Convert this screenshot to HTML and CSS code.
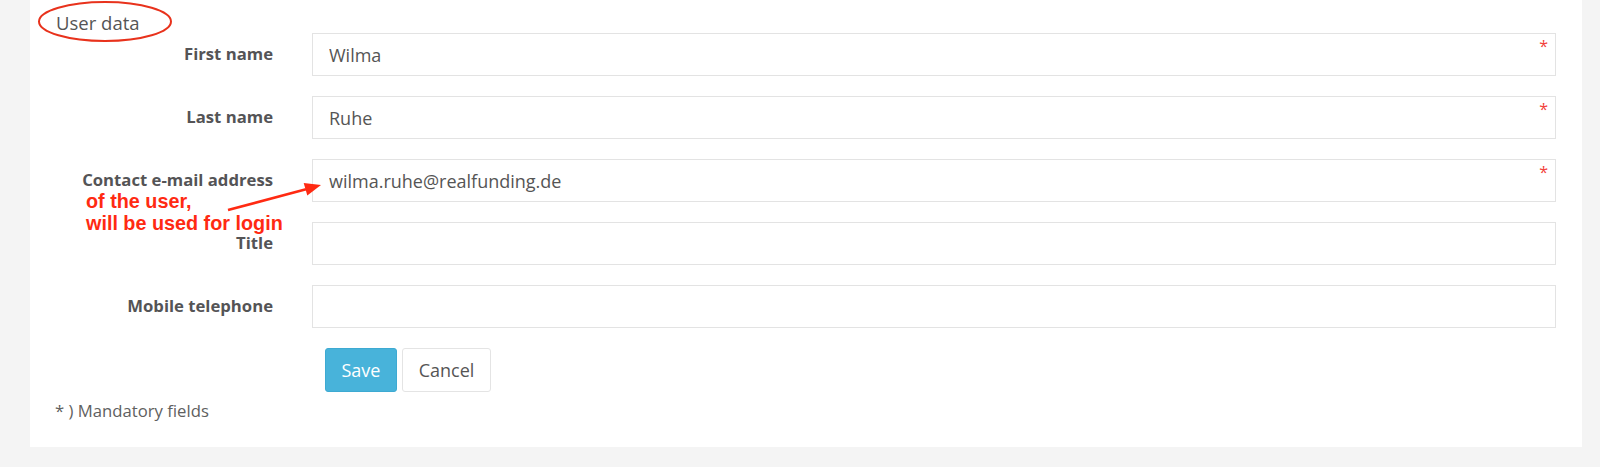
FILE: index.html
```html
<!DOCTYPE html>
<html lang="en">
<head>
<meta charset="utf-8">
<title>User data</title>
<link rel="stylesheet" href="styles.css">
</head>
<body>
<div class="card">
  <div class="legend">User data</div>
  <svg class="ellipse" width="140" height="44" viewBox="0 0 140 44"><ellipse cx="69" cy="21.5" rx="66" ry="19.5" fill="none" stroke="#e8321c" stroke-width="2"/></svg>

  <form class="form">
    <div class="row">
      <label class="label">First name</label>
      <div class="field"><input class="input" type="text" value="Wilma"><span class="req">*</span></div>
    </div>
    <div class="row">
      <label class="label">Last name</label>
      <div class="field"><input class="input" type="text" value="Ruhe"><span class="req">*</span></div>
    </div>
    <div class="row">
      <label class="label">Contact e-mail address</label>
      <div class="field"><input class="input" type="text" value="wilma.ruhe@realfunding.de"><span class="req">*</span></div>
    </div>
    <div class="row">
      <label class="label">Title</label>
      <div class="field"><input class="input" type="text" value=""></div>
    </div>
    <div class="row">
      <label class="label">Mobile telephone</label>
      <div class="field"><input class="input" type="text" value=""></div>
    </div>
    <div class="actions">
      <button type="button" class="btn btn-save">Save</button>
      <button type="button" class="btn btn-cancel">Cancel</button>
    </div>
  </form>

  <p class="note">* ) Mandatory fields</p>

  <div class="annot">of the user,<br>will be used for login</div>
  <svg class="arrow" width="110" height="50" viewBox="0 0 110 50">
    <line x1="8" y1="40" x2="86" y2="19.2" stroke="#ff2a12" stroke-width="2.6"/>
    <polygon points="101,15 87.3,25.5 83.7,12.9" fill="#ff2a12"/>
  </svg>
</div>
</body>
</html>
```

FILE: styles.css
```css
html, body {
  margin: 0;
  padding: 0;
}
body {
  background: #f4f4f4;
  font-family: "Open Sans", "Noto Sans", sans-serif;
  color: #555;
}
.card {
  position: relative;
  background: #fff;
  margin: 0 18px 20px 30px;
  padding: 12px 26px 25px 25px;
}
.legend {
  font-size: 18.5px;
  line-height: 21px;
  color: #555;
  padding-left: 1px;
}
.ellipse {
  position: absolute;
  left: 6px;
  top: 0;
}
.form {
  display: flex;
  flex-direction: column;
  gap: 20px;
  margin: 0;
}
.row {
  display: grid;
  grid-template-columns: 218px 1fr;
  column-gap: 39px;
  align-items: center;
  height: 43px;
}
.label {
  font-size: 16.7px;
  font-weight: 700;
  color: #545456;
  text-align: right;
  padding-bottom: 2px;
}
.field {
  position: relative;
  height: 43px;
}
.input {
  box-sizing: border-box;
  width: 100%;
  height: 43px;
  margin: 0;
  border: 1px solid #e3e3e3;
  border-radius: 0;
  padding: 0 16px;
  font-family: "Open Sans", "Noto Sans", sans-serif;
  font-size: 18px;
  color: #555;
  background: #fff;
  outline: none;
}
.req {
  position: absolute;
  right: 8px;
  top: 5px;
  font-size: 16px;
  line-height: 16px;
  color: #f2403a;
}
.actions {
  display: flex;
  gap: 5px;
  padding-left: 270px;
}
.btn {
  box-sizing: border-box;
  height: 44px;
  border-radius: 3px;
  font-family: "Open Sans", "Noto Sans", sans-serif;
  font-size: 18px;
  padding: 0;
  margin: 0;
  cursor: pointer;
}
.btn-save {
  width: 72px;
  background: #48b3da;
  border: 1px solid #3eaad2;
  color: #fff;
}
.btn-cancel {
  width: 89px;
  background: #fff;
  border: 1px solid #e4e4e4;
  color: #555;
}
.note {
  margin: 8px 0 0 0;
  font-size: 16.7px;
  line-height: 22px;
  color: #606060;
}
.annot {
  position: absolute;
  left: 56px;
  top: 190px;
  font-family: "Liberation Sans", Arial, sans-serif;
  font-weight: 700;
  font-size: 19.8px;
  line-height: 22px;
  color: #ff2a12;
}
.arrow {
  position: absolute;
  left: 190px;
  top: 170px;
}
```
